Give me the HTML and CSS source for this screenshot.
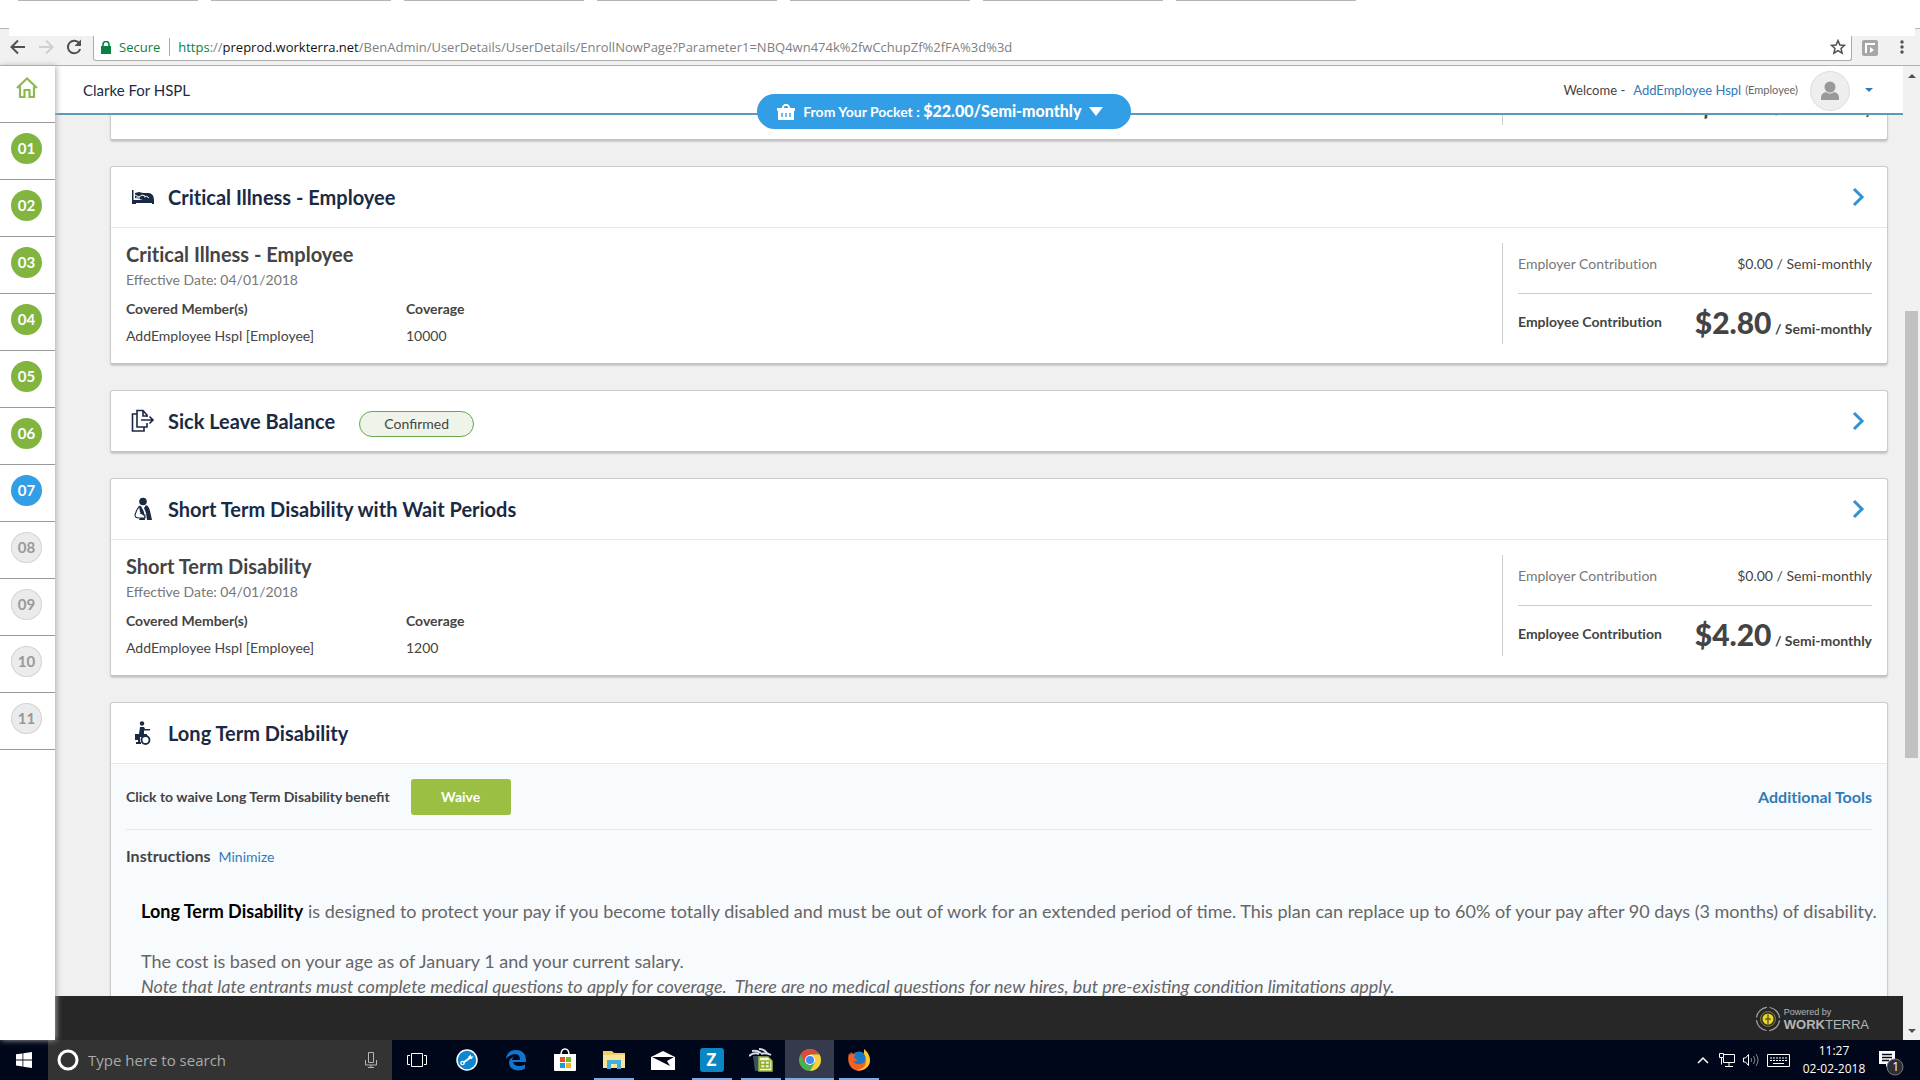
FILE: index.html
```html
<!DOCTYPE html>
<html lang="en">
<head>
<meta charset="utf-8">
<title>Workterra - Enroll Now</title>
<link rel="stylesheet" href="styles.css">
</head>
<body>
<svg class="defs" aria-hidden="true">
  <symbol id="chevron" viewBox="0 0 14 20"><path d="M3 2l8 8-8 8" fill="none" stroke="#2e93cf" stroke-width="3"/></symbol>
</svg>
<div class="tabstrip"><i></i><i></i><i></i><i></i><i></i><i></i><i></i></div>
<div class="toolbar">
  <button class="tool" aria-label="Back"><svg width="18" height="18" viewBox="0 0 18 18"><path d="M16 9H3M9 2.500L2.500 9 9 15.500" fill="none" stroke="#505050" stroke-width="2"/></svg></button>
  <button class="tool" aria-label="Forward"><svg width="18" height="18" viewBox="0 0 18 18"><path d="M2 9h13M9 2.500L15.500 9 9 15.500" fill="none" stroke="#d0d0d0" stroke-width="2"/></svg></button>
  <button class="tool" aria-label="Reload"><svg width="18" height="18" viewBox="0 0 18 18"><path d="M14.500 5.500A6.300 6.300 0 1 0 15.200 11" fill="none" stroke="#505050" stroke-width="2"/><path d="M16 1.500V8H9.500z" fill="#505050"/></svg></button>
  <div class="omnibox">
    <svg width="10" height="13" viewBox="0 0 10 13"><path d="M0 5h10v8H0z" fill="#0b8043"/><path d="M2 6V3.500a3 3 0 0 1 6 0V6" fill="none" stroke="#0b8043" stroke-width="1.600"/></svg>
    <span class="secure">Secure</span>
    <span class="url"><span class="scheme">https</span>://<b>preprod.workterra.net</b>/BenAdmin/UserDetails/UserDetails/EnrollNowPage?Parameter1=NBQ4wn474k%2fwCchupZf%2fFA%3d%3d</span>
    <svg class="star" width="16" height="16" viewBox="0 0 16 16"><path d="M8 1.500l1.900 4.500 4.600.4-3.500 3.100 1.100 4.600L8 11.600l-4.100 2.500L5 9.500 1.500 6.400 6.100 6z" fill="none" stroke="#505050" stroke-width="1.500"/></svg>
  </div>
  <svg class="ext" width="16" height="16" viewBox="0 0 16 16"><rect width="16" height="16" rx="2" fill="#a6a6a6"/><path d="M4 13V4h9" fill="none" stroke="#fff" stroke-width="2"/><path d="M8 7l4 3-4 3z" fill="#fff"/></svg>
  <button class="menu" aria-label="Menu"><svg width="4" height="14" viewBox="0 0 4 14" fill="#505050"><circle cx="2" cy="2" r="1.700"/><circle cx="2" cy="7" r="1.700"/><circle cx="2" cy="12" r="1.700"/></svg></button>
</div>

<div class="app">
  <nav class="steps">
    <a class="home" href="#" aria-label="Home"><svg width="22" height="22" viewBox="0 0 22 22"><path d="M1 11L11 1.500 21 11M4 9.500V20h4.500v-7h5v7H18V9.500M3.500 9.500v-2" fill="none" stroke="#8cba4c" stroke-width="2.200"/></svg></a>
    <a href="#"><span class="done">01</span></a>
    <a href="#"><span class="done">02</span></a>
    <a href="#"><span class="done">03</span></a>
    <a href="#"><span class="done">04</span></a>
    <a href="#"><span class="done">05</span></a>
    <a href="#"><span class="done">06</span></a>
    <a href="#"><span class="current">07</span></a>
    <a href="#"><span>08</span></a>
    <a href="#"><span>09</span></a>
    <a href="#"><span>10</span></a>
    <a href="#"><span>11</span></a>
  </nav>

  <div class="page">
    <header class="topbar">
      <span class="company">Clarke For HSPL</span>
      <span class="welcome">Welcome -</span>
      <a class="user" href="#">AddEmployee Hspl</a>
      <span class="role">(Employee)</span>
      <span class="avatar"><svg width="20" height="20" viewBox="0 0 20 20" fill="#999"><circle cx="10" cy="6" r="5.500"/><path d="M1 19v-2q0-5 5-6 4 3 8 0 5 1 5 6v2z"/></svg></span>
      <button class="caret" aria-label="Account menu"><svg width="8" height="4" viewBox="0 0 8 4"><path d="M0 0h8L4 4z" fill="#337ab7"/></svg></button>
      <button class="pocket">
        <svg width="18" height="16" viewBox="0 0 18 16"><path d="M5 6l2-5M13 6l-2-5" stroke="#fff" stroke-width="2"/><path d="M7 0h4v2H7z" fill="#fff"/><path d="M0 4h18v3h-1v9H1V7H0z" fill="#fff"/><path d="M5 9v4M9 9v4M13 9v4" stroke="#329ee6" stroke-width="1.400"/></svg>
        <span>From Your Pocket : <b>$22.00/Semi-monthly</b></span>
        <svg width="14" height="9" viewBox="0 0 14 9"><path d="M0 0h14L7 9z" fill="#fff"/></svg>
      </button>
    </header>

    <main class="scroll">
      <section class="card scrolled">
        <div class="plan">
          <div class="cost">
            <div class="employer"></div>
            <div class="employee"><span class="amount"><b>$</b></span><span class="amount">/ Semi-monthly</span></div>
          </div>
        </div>
      </section>

      <section class="card">
        <div class="head">
          <svg width="24" height="24" viewBox="0 0 24 24" fill="#1b2a44"><path d="M1 5h1.500v10H23v4h-2v-1H5v1H1z"/><path d="M4 8l4-1 4 1h6q5 1 5 7H12L4 13z"/><path d="M4 10l4 2 3-2 3 1M5 13l4 0M13 12q3-2 5 1" fill="none" stroke="#fff" stroke-width="1"/></svg>
          <h2>Critical Illness - Employee</h2>
          <a class="more" href="#" aria-label="Open"><svg width="14" height="20"><use href="#chevron"/></svg></a>
        </div>
        <div class="plan">
          <div class="details">
            <h3>Critical Illness - Employee</h3>
            <p class="date">Effective Date: 04/01/2018</p>
            <table><tr><th>Covered Member(s)</th><th>Coverage</th></tr><tr><td>AddEmployee Hspl [Employee]</td><td>10000</td></tr></table>
          </div>
          <div class="cost">
            <div class="employer"><span>Employer Contribution</span><span class="amount">$0.00 / Semi-monthly</span></div>
            <div class="employee"><span>Employee Contribution</span><span class="amount"><b>$2.80</b> / Semi-monthly</span></div>
          </div>
        </div>
      </section>

      <section class="card">
        <div class="head">
          <svg width="24" height="24" viewBox="0 0 24 24" fill="none" stroke="#1b2a44" stroke-width="1.600"><path d="M16 8V6l-4-4.500H6V18h10v-4M12 2v5h4"/><path d="M6 5H1.500v17H13v-4M10 11h12M18.500 7.500L22 11l-3.500 3.500"/></svg>
          <h2>Sick Leave Balance</h2>
          <span class="badge">Confirmed</span>
          <a class="more" href="#" aria-label="Open"><svg width="14" height="20"><use href="#chevron"/></svg></a>
        </div>
      </section>

      <section class="card">
        <div class="head">
          <svg width="24" height="24" viewBox="0 0 24 24" fill="#1b2a44"><circle cx="12" cy="4.500" r="3.800"/><path d="M13 11l2-3q3 1 4 6l2 9h-5l-1-7z"/><path d="M8 9h2l3 6 1 8H8l1-2h4v-2L9 15z"/><path d="M9 9q-3 2-5 9 0 3 4 3h6v-3L9 16" fill="none" stroke="#1b2a44" stroke-width="1.100"/></svg>
          <h2>Short Term Disability with Wait Periods</h2>
          <a class="more" href="#" aria-label="Open"><svg width="14" height="20"><use href="#chevron"/></svg></a>
        </div>
        <div class="plan">
          <div class="details">
            <h3>Short Term Disability</h3>
            <p class="date">Effective Date: 04/01/2018</p>
            <table><tr><th>Covered Member(s)</th><th>Coverage</th></tr><tr><td>AddEmployee Hspl [Employee]</td><td>1200</td></tr></table>
          </div>
          <div class="cost">
            <div class="employer"><span>Employer Contribution</span><span class="amount">$0.00 / Semi-monthly</span></div>
            <div class="employee"><span>Employee Contribution</span><span class="amount"><b>$4.20</b> / Semi-monthly</span></div>
          </div>
        </div>
      </section>

      <section class="card">
        <div class="head">
          <svg width="24" height="24" viewBox="0 0 24 24" fill="#1b2a44"><circle cx="11" cy="2.500" r="2.200"/><path d="M9 6h4l1 2h5v1.500h-6V13h3v3H9v6H7v-3H4v-6h4z"/><path d="M5 21h5v2H5z"/><circle cx="14.500" cy="19" r="4" fill="#fff" stroke="#1b2a44" stroke-width="1.800"/></svg>
          <h2>Long Term Disability</h2>
        </div>
        <div class="election">
          <div class="waive-row">
            <span class="waive-label">Click to waive Long Term Disability benefit</span>
            <button class="waive">Waive</button>
            <a class="tools" href="#">Additional Tools</a>
          </div>
          <div class="instructions"><b>Instructions</b><a href="#">Minimize</a></div>
          <div class="copy">
            <p><strong>Long Term Disability</strong> is designed to protect your pay if you become totally disabled and must be out of work for an extended period of time. This plan can replace up to 60% of your pay after 90 days (3 months) of disability.</p>
            <p>The cost is based on your age as of January 1 and your current salary.<br><em>Note that late entrants must complete medical questions to apply for coverage.&nbsp; There are no medical questions for new hires, but pre-existing condition limitations apply.</em></p>
          </div>
        </div>
      </section>
    </main>

    <footer class="foot">
      <svg width="26" height="26" viewBox="0 0 28 28" fill="none"><circle cx="14" cy="14" r="12.500" stroke="#a5a5a5" stroke-width="1.300" stroke-dasharray="16.600 3" stroke-dashoffset="-1.500"/><circle cx="14" cy="14" r="8" stroke="#8b8735" stroke-width="1"/><circle cx="14" cy="14" r="6" fill="#e5d52e"/><path d="M14 9v10M11 14h6" stroke="#5d5a20" stroke-width="1.500"/></svg>
      <div class="brand"><span>Powered by</span><span class="name"><b>WORK</b>TERRA</span></div>
    </footer>
  </div>

  <div class="scrollbar">
    <svg width="8" height="4" viewBox="0 0 8 4"><path d="M0 4h8L4 0z" fill="#505050"/></svg>
    <div class="track"><div class="thumb"></div></div>
    <svg width="8" height="4" viewBox="0 0 8 4"><path d="M0 0h8L4 4z" fill="#505050"/></svg>
  </div>
</div>

<div class="taskbar">
  <button class="start" aria-label="Start"><svg width="16" height="16" viewBox="0 0 16 16" fill="#fff"><path d="M0 2.300l6.500-.9v6.100H0zM7.300 1.300L16 0v7.500H7.300zM0 8.400h6.500v6.100L0 13.600zM7.300 8.400H16V16l-8.700-1.300z"/></svg></button>
  <label class="search">
    <svg width="22" height="22" viewBox="0 0 22 22"><circle cx="11" cy="11" r="9" fill="none" stroke="#fff" stroke-width="3"/></svg>
    <input type="text" placeholder="Type here to search" aria-label="Search">
    <svg width="12" height="16" viewBox="0 0 12 16" fill="none" stroke="#b5b5b5"><path d="M3.500.5h5v10h-5zM.5 8v5h11V8M6 13v3M3 15.500h6"/></svg>
  </label>
  <button class="view" aria-label="Task view"><svg width="20" height="14" viewBox="0 0 20 14" fill="none" stroke="#fff"><path d="M4.500.5h11v13h-11zM3 2.500H.5v9H3M17 2.500h2.500v9H17"/></svg></button>
  <button class="app-button" aria-label="Support"><svg width="22" height="22" viewBox="0 0 22 22"><circle cx="11" cy="11" r="10" fill="#0f86cf" stroke="#fff" stroke-width="1.500"/><path d="M7.500 13.500l7-5" stroke="#fff" stroke-width="2"/><path d="M17.500 7.500l-2 2.500-3-.5v-2l2.500-2v2z" fill="#fff"/><circle cx="6.500" cy="14" r="1.700" fill="none" stroke="#fff" stroke-width="1.300"/></svg></button>
  <button class="app-button" aria-label="Edge"><svg width="22" height="22" viewBox="0 0 22 22"><path d="M1 10Q2 1 11 1q9 0 10 9v3H8q1 4 6 4 3 0 6-1.500v4q-3 2-7 2-9-1-9-8 0-4 5-6-2 2-2 3.500h8Q15 5 10.500 5 5 5 1 10z" fill="#0f75d1"/></svg></button>
  <button class="app-button" aria-label="Store"><svg width="24" height="24" viewBox="0 0 24 24"><path d="M8 7q0-6 4-6t4 6" fill="none" stroke="#fff" stroke-width="1.500"/><path d="M1 6h22v16q0 1-1 1H2q-1 0-1-1z" fill="#fff"/><path d="M7 9h5v5H7z" fill="#e74f20"/><path d="M13 9h5v5h-5z" fill="#79b520"/><path d="M7 15h5v5H7z" fill="#159dde"/><path d="M13 15h5v5h-5z" fill="#f5b51b"/></svg></button>
  <button class="app-button open" aria-label="File Explorer"><svg width="22" height="20" viewBox="0 0 22 20"><path d="M0 1h9l2 2h11v15H0z" fill="#f0cf6b"/><path d="M0 5h22v13H0z" fill="#fbe49a"/><path d="M4 19v-9h14v9h-4v-5H8v5z" fill="#45aedb"/></svg></button>
  <button class="app-button" aria-label="Mail"><svg width="24" height="20" viewBox="0 0 24 20"><path d="M0 7l12-6 12 6v13H0z" fill="#fff"/><path d="M1 7h22l-7 4 3 5L1 7z" fill="#00071a"/></svg></button>
  <button class="app-button open" aria-label="Z"><span class="zed">Z</span></button>
  <button class="app-button open" aria-label="Spreadsheet"><svg width="24" height="24" viewBox="0 0 24 24"><path d="M4 8h8l-2 15H6z" fill="#3a5260"/><path d="M10 9h9l4 4v10H10z" fill="#f2f5e4" stroke="#a0b63a" stroke-width="1.500"/><path d="M11.500 13h9v7h-9zM16 13v7M11.500 16.500h9" fill="none" stroke="#8fae25" stroke-width="1.500"/><path d="M0 8q5-4 10-2M3 3q5-1 9 2M10 1q5 0 8 4M12 6q5-2 10 1" fill="none" stroke="#d5dce0" stroke-width="2"/></svg></button>
  <button class="app-button open active" aria-label="Chrome"><svg width="22" height="22" viewBox="0 0 22 22"><circle cx="11" cy="11" r="11" fill="#4caf50"/><path d="M1.500 5.500A11 11 0 0 1 20.500 5.500H11L6 14z" fill="#dd4b3e"/><path d="M20.500 5.500A11 11 0 0 1 11 22l5-8.500-5-8z" fill="#fdcf3c"/><circle cx="11" cy="11" r="5" fill="#fff"/><circle cx="11" cy="11" r="4" fill="#4285f4"/></svg></button>
  <button class="app-button open" aria-label="Firefox"><svg width="22" height="22" viewBox="0 0 22 22"><circle cx="11" cy="11.500" r="9" fill="#1879c9"/><path d="M1 4q-3 12 5 16.500T21 15q2-7-3-12l-2-3q0 4 1 6 2 7-4 9-5 1-8-3 3 1 5-1-4-1-4-4l2-1Q4 5 3 3L2 6z" fill="#f4601f"/><path d="M16 0q6 5 6 11t-5 9q-4 2-8 1 9-1 9-9 0-5-2-7z" fill="#ffc52e"/></svg></button>

  <div class="tray">
    <svg class="up" width="12" height="8" viewBox="0 0 12 8"><path d="M1 7l5-5 5 5" fill="none" stroke="#fff" stroke-width="1.500"/></svg>
    <svg width="16" height="14" viewBox="0 0 16 14" fill="none" stroke="#fff"><path d="M5 1.500h10.500v8H4.500V5M10 9.500v4M6 13.500h8M.5.500h4v4h-4zM2.500 4.500v7"/></svg>
    <svg width="16" height="14" viewBox="0 0 16 14" fill="none" stroke="#fff"><path d="M.5 5v4h2l3 3.500v-11L2.500 5z"/><path d="M8 5q1.500 2 0 4M10.500 3q3 4 0 8M13 1q4 6 0 12" stroke="#888"/></svg>
    <svg width="23" height="13" viewBox="0 0 23 13" fill="none" stroke="#fff"><path d="M.5.500h22v12H.5z"/><path d="M3 4h17M3 6.500h17" stroke-dasharray="2 1"/><path d="M6 9.500h11"/></svg>
    <div class="clock"><span>11:27</span><span>02-02-2018</span></div>
    <button class="notify" aria-label="Notifications"><svg width="26" height="26" viewBox="0 0 26 26"><path d="M1 1h16v13h-6l-3 3v-3H1z" fill="#fff"/><path d="M4 4.500h10M4 7.500h10M4 10.500h7" stroke="#00071a" stroke-width="1.300"/><circle cx="17" cy="17" r="8" fill="#2b2f38" stroke="#777" /></svg><span>1</span></button>
  </div>
</div>
</body>
</html>
```
FILE: styles.css
```css
* { box-sizing: border-box; }

body {
  margin: 0;
  height: 100vh;
  display: flex;
  flex-direction: column;
  overflow: hidden;
  background: #fff;
  color: #444;
  font: 14px/20px Lato, "Open Sans", sans-serif;
}

h2, h3, p { margin: 0; }
h2, h3, .cost, .tools, .instructions { font-variant-ligatures: none; }
a { color: #337ab7; text-decoration: none; }
button { padding: 0; border: 0; background: none; font: inherit; }
svg { display: block; flex: none; }
.defs { position: absolute; width: 0; height: 0; }

/* Browser chrome */
.tabstrip { flex: none; height: 28px; padding-left: 18px; display: flex; gap: 13px; }
.tabstrip i { width: 180px; height: 1px; background: #b5b5b5; }

.toolbar {
  position: relative;
  flex: none;
  height: 38px;
  display: flex;
  align-items: center;
  padding: 0 16px 0 9px;
  background: #f1f1f1;
  border-top: 1px solid #b5b5b5;
  border-bottom: 1px solid #b0b0b0;
  font: 13px/18px "Open Sans", sans-serif;
}
.toolbar::before {
  content: "";
  position: absolute;
  inset: -1px 5px auto 9px;
  height: 8px;
  background: #fff;
}
.tool { width: 28px; }
.omnibox {
  flex: 1;
  align-self: stretch;
  margin-bottom: 4px;
  padding: 5px 5px 0 7px;
  display: flex;
  align-items: center;
  background: #fff;
  border: 1px solid #aaa;
  border-top: 0;
  border-radius: 0 0 3px 3px;
}
.secure { margin-left: 8px; padding-right: 9px; color: #0b8043; border-right: 1px solid #aaa; }
.url { margin-left: 8px; color: #808080; }
.url b { font-weight: 400; color: #111; }
.scheme { color: #0b8043; }
.star { margin-left: auto; }
.ext { margin: 2px 22px 0 10px; }

/* Application shell */
.app { flex: 1; min-height: 0; display: flex; }

.steps { z-index: 2; flex: none; width: 55px; background: #fff; box-shadow: 1px 0 6px #aaa; }
.steps a { display: block; height: 57px; padding: 10px 0 0 11px; border-bottom: 1px solid #999; }
.steps .home { padding-left: 16px; padding-top: 11px; }
.steps span {
  display: block;
  width: 31px;
  height: 31px;
  line-height: 31px;
  border-radius: 50%;
  text-align: center;
  font-size: 15px;
  font-weight: 700;
  color: #999;
  background: #ebebeb;
  box-shadow: inset 0 0 0 1px #d5d5d5;
}
.steps .done { color: #fff; background: #82b440; box-shadow: none; }
.steps .current { color: #fff; background: #329ee6; box-shadow: none; }

.page { flex: 1; min-width: 0; display: flex; flex-direction: column; }
.topbar {
  position: relative;
  z-index: 1;
  flex: none;
  height: 49px;
  display: flex;
  align-items: center;
  padding: 0 30px 0 28px;
  background: #fff;
  border-bottom: 2px solid #5a9bb5;
  font-size: 13px;
}
.company { margin-right: auto; font-size: 15px; color: #1b2a44; }
.user { margin-left: 8px; }
.role { margin-left: 4px; font-size: 11px; color: #666; }
.avatar {
  width: 40px;
  height: 40px;
  margin: 2px 15px 0 12px;
  display: grid;
  place-items: center;
  border: 1px solid #ddd;
  border-radius: 50%;
  background: #eee;
}
.pocket {
  position: absolute;
  top: 28px;
  left: 38%;
  height: 35px;
  padding: 0 28px 0 20px;
  display: flex;
  align-items: center;
  gap: 8px;
  border-radius: 18px;
  background: #329ee6;
  color: #fff;
  font-size: 14px;
  font-weight: 700;
}
.pocket b { font-size: 16px; }

.scroll {
  flex: 1;
  min-height: 0;
  overflow: hidden;
  padding: 0 15px 0 55px;
  background: #f0f0f0;
  display: flex;
  flex-direction: column;
  gap: 25px;
}

/* Benefit cards */
.card {
  flex: none;
  border: 1px solid #ccc;
  border-bottom: 2px solid #c4c4c4;
  border-radius: 3px;
  background: #fff;
  box-shadow: 0 1px 2px #ccc;
}
.scrolled { margin-top: -107px; }
.scrolled .employee { padding-left: 180px; }
.head { height: 60px; padding: 0 22px 0 20px; display: flex; align-items: center; }
.head + div { border-top: 1px solid #e8e8e8; }
.head h2 { margin-left: 13px; font-size: 20px; font-weight: 700; line-height: 28px; color: #1b2a44; }
.more { margin-left: auto; }
.badge {
  width: 115px;
  height: 26px;
  margin: 5px 0 0 24px;
  line-height: 24px;
  text-align: center;
  border: 1px solid #6aa84f;
  border-radius: 13px;
  background: #eef4ea;
}

.plan { display: flex; justify-content: space-between; padding: 15px 15px 14px; }
.details h3 { margin-top: -3px; font-size: 20px; font-weight: 700; line-height: 28px; }
.date { line-height: 24px; color: #777; }
.details table { margin-top: 3px; border-collapse: collapse; }
.details th, .details td { min-width: 280px; padding: 0; text-align: left; line-height: 27px; }
.details th { font-weight: 700; }
.cost { width: 370px; height: 101px; margin-left: auto; padding-left: 15px; border-left: 1px solid #ccc; }
.cost div { display: flex; justify-content: space-between; align-items: center; }
.employer { height: 51px; border-bottom: 1px solid #ccc; padding-bottom: 9px; color: #777; }
.employer .amount { color: #444; }
.employee { padding-top: 8px; font-weight: 700; }
.employee b { font-size: 30px; line-height: 40px; }
.cost .employee:has(.amount:first-child) { align-items: baseline; }

.election { padding: 0 15px; background: #f8fbfe; }
.waive-row { height: 66px; display: flex; align-items: center; border-bottom: 1px solid #e4e8ec; }
.waive-label { font-weight: 700; }
.waive {
  width: 100px;
  height: 36px;
  margin-left: 21px;
  border-radius: 3px;
  background: #9abf42;
  color: #fff;
  font-weight: 700;
}
.tools { margin-left: auto; font-size: 16px; font-weight: 700; }
.instructions { padding-top: 14px; display: flex; align-items: baseline; gap: 8px; line-height: 24px; }
.instructions b { font-size: 16px; }
.copy { padding: 30px 0 30px 15px; font-size: 18px; line-height: 25px; color: #666; white-space: nowrap; }
.copy p + p { margin-top: 25px; }
.copy strong { color: #000; }

.foot {
  flex: none;
  height: 44px;
  padding: 2px 34px 0 0;
  display: flex;
  align-items: center;
  justify-content: flex-end;
  gap: 3px;
  background: #272727;
  color: #b5b5b5;
}
.brand { display: flex; flex-direction: column; font: 9px/11px "Liberation Sans", Arial, sans-serif; }
.brand .name { font-size: 13px; line-height: 14px; }

.scrollbar {
  flex: none;
  width: 17px;
  padding: 8px 2px 7px;
  display: flex;
  flex-direction: column;
  align-items: center;
  background: #f1f1f1;
}
.track { flex: 1; align-self: stretch; }
.thumb { height: 47%; margin-top: 233px; background: #c1c1c1; }

/* Taskbar */
.taskbar {
  flex: none;
  height: 40px;
  display: flex;
  background: #00071a;
  font-family: "Open Sans", sans-serif;
  color: #fff;
}
.taskbar button { display: grid; place-items: center; flex: none; color: #fff; }
.taskbar .start { width: 48px; }
.search { width: 344px; padding: 0 15px 0 9px; display: flex; align-items: center; background: #333; }
.search input {
  flex: 1;
  min-width: 0;
  margin-left: 9px;
  padding: 0;
  border: 0;
  outline: 0;
  background: none;
  font: 15px/20px "Open Sans", sans-serif;
}
.search input::placeholder { color: #aaa; }
.taskbar .view { width: 50px; }
.taskbar .app-button { width: 49px; }
.taskbar .open {
  background: linear-gradient(#76aee8, #76aee8) bottom / 40px 2px no-repeat;
}
.taskbar .active { background-color: #353a4c; background-size: 100% 2px; }
.zed {
  width: 24px;
  height: 24px;
  border-radius: 3px;
  background: #0a86c4;
  font: 700 17px/24px "Open Sans", sans-serif;
}
.tray { margin-left: auto; padding-right: 16px; display: flex; align-items: center; gap: 8px; }
.up { margin-right: 2px; }
.clock { width: 72px; display: flex; flex-direction: column; text-align: center; font-size: 12px; line-height: 18px; }
.taskbar .notify { position: relative; width: 26px; padding-top: 6px; }
.notify span { position: absolute; right: 5px; bottom: -1px; font-size: 12px; line-height: 20px; }
```
